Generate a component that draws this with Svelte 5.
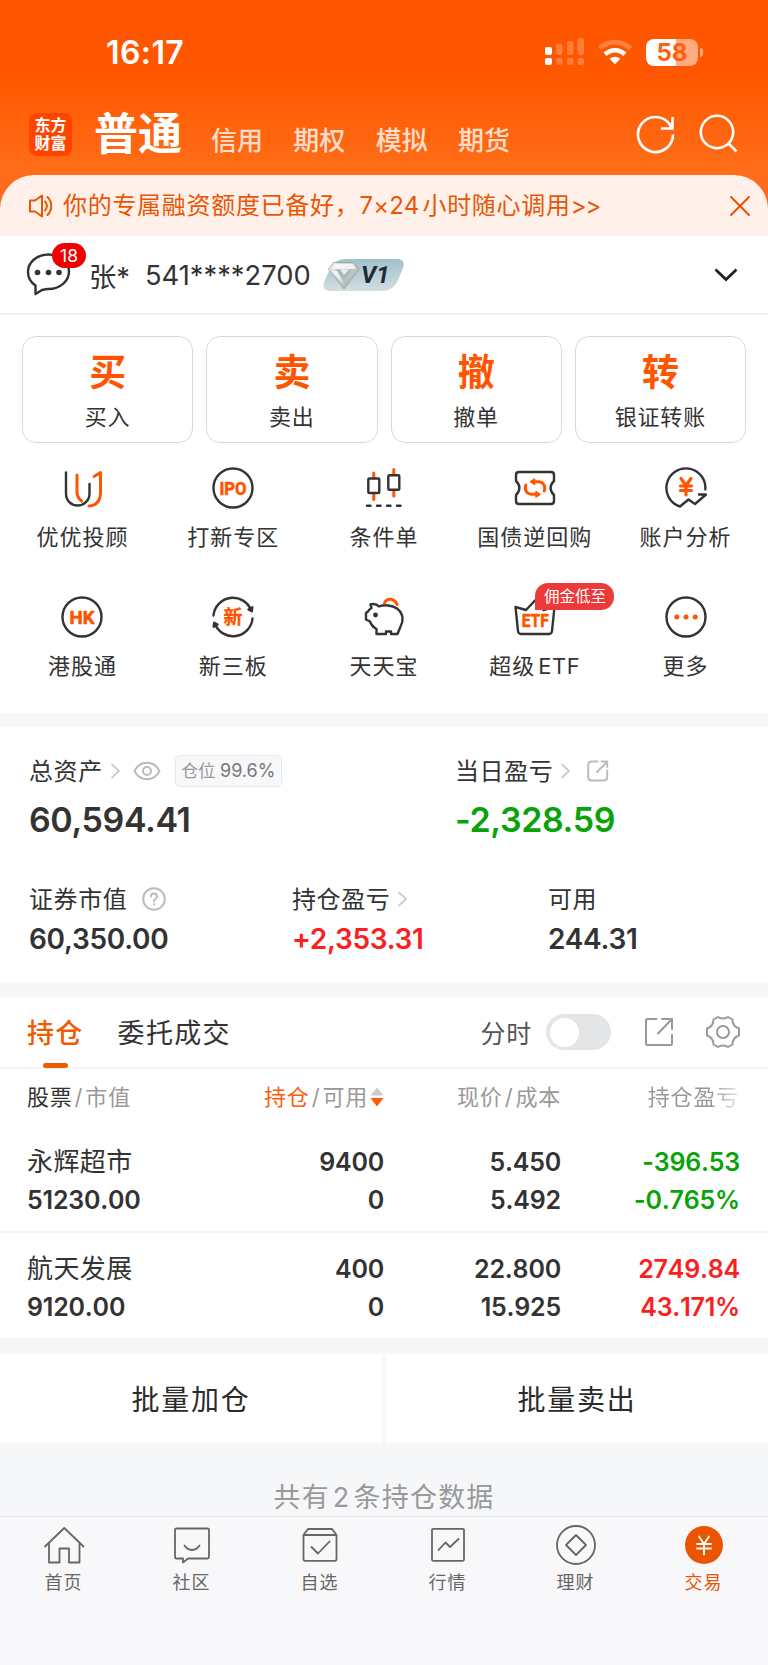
<script>
	let intraday = $state(false);

	const accountTabs = ['信用', '期权', '模拟', '期货'];

	const actions = [
		{ glyph: '买', label: '买入' },
		{ glyph: '卖', label: '卖出' },
		{ glyph: '撤', label: '撤单' },
		{ glyph: '转', label: '银证转账' }
	];

	const tools = [
		{ icon: 'advisor', label: '优优投顾' },
		{ icon: 'ipo', label: '打新专区' },
		{ icon: 'candles', label: '条件单' },
		{ icon: 'repo', label: '国债逆回购' },
		{ icon: 'analysis', label: '账户分析' },
		{ icon: 'hk', label: '港股通' },
		{ icon: 'neeq', label: '新三板' },
		{ icon: 'piggy', label: '天天宝' },
		{ icon: 'etf', label: '超级', latin: 'ETF', tip: '佣金低至' },
		{ icon: 'more', label: '更多' }
	];

	const holdings = [
		{
			name: '永辉超市',
			value: '51230.00',
			amount: '9400',
			usable: '0',
			price: '5.450',
			cost: '5.492',
			profit: '-396.53',
			rate: '-0.765%'
		},
		{
			name: '航天发展',
			value: '9120.00',
			amount: '400',
			usable: '0',
			price: '22.800',
			cost: '15.925',
			profit: '2749.84',
			rate: '43.171%'
		}
	];

	const nav = [
		{ icon: 'home', label: '首页' },
		{ icon: 'chat', label: '社区' },
		{ icon: 'watch', label: '自选' },
		{ icon: 'market', label: '行情' },
		{ icon: 'wealth', label: '理财' },
		{ icon: 'trade', label: '交易', active: true }
	];
</script>

{#snippet arrow()}
	<svg class="arrow" width="9" height="16" viewBox="0 0 9 16">
		<path d="M1 1.500 8 8 1 14.500" />
	</svg>
{/snippet}

{#snippet toolIcon(name)}
	<svg class="tool-icon" width="44" height="44" viewBox="0 0 44 44">
		{#if name === 'advisor'}
			<path d="M6 6.500v21c0 7 5 12 11.500 12s12-5 12-12V18" />
			<path class="hot" d="M17 9v17c0 4 1.500 6.500 4.500 9M34 10.500l6.500-4V26c0 9-4 13.500-11.500 14" />
		{:else if name === 'ipo'}
			<circle cx="22" cy="22" r="19.500" />
			<text x="22" y="28.500" textLength="27" lengthAdjust="spacingAndGlyphs">IPO</text>
		{:else if name === 'candles'}
			<path class="hot" d="M11.800 7v5M11.800 28.500v5M31.800 3.500v5M31.800 25v5" />
			<rect x="6.300" y="12.500" width="11" height="14.500" rx="1" />
			<rect x="26.300" y="9.200" width="11" height="14.500" rx="1" />
			<path d="M5 39.800h3.500M15 39.800h3.500M25 39.800h3.500M35 39.800h3.500" />
		{:else if name === 'repo'}
			<path
				d="M6 6h32c1.800 0 3 1.200 3 3v6c-4.500 4-4.500 10 0 14v6c0 1.800-1.200 3-3 3H6c-1.800 0-3-1.200-3-3v-6c4.500-4 4.500-10 0-14V9c0-1.800 1.200-3 3-3z"
			/>
			<path class="hot" d="M12.800 19c-1.600 5 .7 9.300 6.200 9.300h4M31.200 25c1.600-5-.7-9.300-6.200-9.300h-4" />
			<path class="hot fill" d="m21.500 13-4 2.700 4 2.700zM23 25.600l4 2.700-4 2.700z" />
		{:else if name === 'analysis'}
			<path d="M41.300 23.500A19.500 19.500 0 1 0 16 40.500l8.500-7 6.500 4.500L42 28.500h-7" />
			<path class="hot yen" d="m17 12.500 5 7 5-7M22 19.500V29M16.500 20h11M16.500 24.500h11" />
		{:else if name === 'hk'}
			<circle cx="22" cy="22" r="19.500" />
			<text x="22" y="28.500" textLength="25" lengthAdjust="spacingAndGlyphs">HK</text>
		{:else if name === 'neeq'}
			<path d="M2.500 20.500A19.500 19.500 0 0 1 40 15M41.500 23.500A19.500 19.500 0 0 1 4 29" />
			<path class="solid" d="m37.500 14.500 3.300 1.800.5-4zM6.500 29.500l-3.300-1.800-.5 4z" />
			<text class="zh" x="22" y="29">新</text>
		{:else if name === 'piggy'}
			<path
				d="M8.500 9.500c3-1 6-.5 8.500 2 5-2 13-1.500 18 2 7 5.500 6.500 13 3.500 18L35.500 39H29v-2.500h-5V39h-9.500v-5c-3.500-2-5.500-4.500-6.500-7.500l-4-2v-6.500L6 16.500c.8-1.500 2-2.700 3.500-3.500z"
			/>
			<path class="hot" d="M22.500 8c2-5 10-5.500 12.500 1.500" />
			<circle class="solid" cx="13.500" cy="20" r="1.200" />
		{:else if name === 'etf'}
			<path
				d="M2.500 12 5 36c.2 2 1.200 3 3 3h28c1.800 0 2.800-1 3-3l2.500-24-11 3L22 5.500 13 15z"
			/>
			<text x="22.200" y="32" textLength="27" lengthAdjust="spacingAndGlyphs">ETF</text>
		{:else if name === 'more'}
			<circle cx="22" cy="22" r="19.500" />
			<path class="dots" d="M12.800 22h.01M22 22h.01M31.200 22h.01" />
		{/if}
	</svg>
{/snippet}

{#snippet navIcon(name)}
	<svg class="nav-icon" width="42" height="42" viewBox="0 0 42 42">
		{#if name === 'home'}
			<path d="M2 22.500 21.300 4l19.200 18.500M6 19v19.500h10.500v-14h9.500v14h10.500V19" />
		{:else if name === 'chat'}
			<path
				d="M5.500 4.500h31c1 0 1.500.5 1.500 1.500v27c0 1-.5 1.500-1.500 1.500H17l-5 4v-4H5.500C4.500 34.500 4 34 4 33V6c0-1 .5-1.500 1.500-1.500zM13.500 21.500c4 6 11 6 15 0"
			/>
		{:else if name === 'watch'}
			<path
				d="M4.500 11 9 5h24l4.500 6v24c0 1.200-.5 1.800-1.700 1.800H6.200c-1.200 0-1.700-.6-1.700-1.800zM4.500 11h33M12.500 23l6.500 6.500 11.500-12"
			/>
		{:else if name === 'market'}
			<rect x="5" y="4.800" width="32" height="32" rx="1.200" />
			<path d="m11.500 26 7-7.500 4.500 4.500 8.500-8" />
		{:else if name === 'wealth'}
			<circle cx="21" cy="21" r="19" />
			<path d="M21 11 31 21 21 31 11 21z" />
		{:else if name === 'trade'}
			<circle class="coin" cx="21" cy="21" r="19" />
			<path class="mark" d="m16 12.500 5 7.500 5-7.500M21 20v10.500M14 20h14M14 24.500h14" />
		{/if}
	</svg>
{/snippet}

<div class="screen">
	<header>
		<div class="status">
			<span class="time">16:17</span>
			<div class="signals">
				<svg width="40" height="28" viewBox="0 0 40 28">
					<g fill="#fff">
						<rect x="1" y="9" width="7" height="8" rx="2" />
						<rect x="1" y="20" width="7" height="7" rx="2" />
					</g>
					<g fill="#fff" opacity=".22">
						<rect x="12" y="6" width="6.500" height="11" rx="2" />
						<rect x="23" y="3" width="6.500" height="14" rx="2" />
						<rect x="33.500" y="0" width="6.500" height="17" rx="2" />
						<rect x="12" y="20" width="6.500" height="7" rx="2" />
						<rect x="23" y="20" width="6.500" height="7" rx="2" />
						<rect x="33.500" y="20" width="6.500" height="7" rx="2" />
					</g>
				</svg>
				<svg class="wifi" width="36" height="26" viewBox="0 0 36 26">
					<g fill="none" stroke="#fff" stroke-width="4.600">
						<path opacity=".25" d="M2.500 9.500c9-8.500 22-8.500 31 0" />
						<path d="M8 15.300c6-5.500 14-5.500 20 0" />
					</g>
					<path fill="#fff" d="M12.500 19.800c3.300-2.800 7.700-2.800 11 0L18 25.300z" />
				</svg>
				<div class="battery"><span>58</span></div>
			</div>
		</div>
		<div class="titlebar">
			<div class="logo">东方<br />财富</div>
			<h1>普通</h1>
			<nav class="account-tabs">
				{#each accountTabs as tab}
					<span>{tab}</span>
				{/each}
			</nav>
			<svg class="head-icon" width="40" height="42" viewBox="0 0 40 42">
				<path d="M37 21.500A17.500 17.500 0 1 1 33.500 11l2 3.500M36.500 4v11.500H25" />
			</svg>
			<svg class="head-icon" width="42" height="42" viewBox="0 0 42 42">
				<circle cx="19" cy="19" r="16.200" />
				<path d="m30 30 8.500 8.500" />
			</svg>
		</div>
	</header>

	<div class="notice-wrap">
		<div class="notice">
			<svg class="horn" width="26" height="26" viewBox="0 0 26 26">
				<path
					d="M2 7.500h5l7-5v21l-7-5H2zM17 8.500c2.500 2.500 2.500 6.500 0 9M19.500 4c5 5 5 13 0 18"
				/>
			</svg>
			<p>你的专属融资额度已备好，<span class="seven">7×24</span>小时随心调用<span class="more">&gt;&gt;</span></p>
			<svg class="close" width="20" height="20" viewBox="0 0 20 20">
				<path d="m1 1 18 18M19 1 1 19" />
			</svg>
		</div>
	</div>

	<div class="account">
		<div class="message">
			<svg width="46" height="46" viewBox="0 0 46 46">
				<path
					d="M22.500 2.500c11.500 0 20.500 7.500 20.500 17S34 37 22.500 37c-2.500 0-4.500.5-6.500 1L9.500 42v-8.500C5 30.500 2 25.500 2 20 2 10 11 2.500 22.500 2.500z"
				/>
				<path class="dots" d="M11.500 20.500h.01M22.500 20.500h.01M33 20.500h.01" />
			</svg>
			<b>18</b>
		</div>
		<span class="owner">张*</span>
		<span class="number">541****2700</span>
		<div class="level">
			<svg width="82" height="34" viewBox="0 0 82 34">
				<defs>
					<linearGradient id="plate" x1="0" y1="0" x2="0" y2="1">
						<stop offset="0" stop-color="#9fc1ca" />
						<stop offset="1" stop-color="#d3dde1" />
					</linearGradient>
					<linearGradient id="gem" x1="0" y1="0" x2="1" y2="1">
						<stop offset="0" stop-color="#e9eded" />
						<stop offset="1" stop-color="#9aa5a8" />
					</linearGradient>
				</defs>
				<path
					fill="url(#plate)"
					d="M24 1h50c6 0 8 4 6 9l-5 12c-3 7-8 11-16 11H8c-7 0-9-4-6.500-10L6 13C9 5 14 1 24 1z"
				/>
				<path fill="url(#gem)" stroke="#8f9b9e" stroke-width=".7" d="M11 4.500h20l5 7L21 31 5.500 11.500z" />
				<path fill="#fff" opacity=".75" d="M12 6h18l3 5H9zM9 13h5l7 14z" />
				<path fill="#aab5b8" d="M13 11.500h16L21 22z" />
				<path fill="#e8eeee" d="M17 11.500h9L21 17z" />
			</svg>
			<em>V1</em>
		</div>
		<svg class="expand" width="26" height="16" viewBox="0 0 26 16">
			<path d="m2.500 2.500 10.500 10 10.500-10" />
		</svg>
	</div>

	<div class="actions">
		{#each actions as action}
			<button>
				<strong>{action.glyph}</strong>
				<span>{action.label}</span>
			</button>
		{/each}
	</div>

	<div class="tools">
		{#each tools as tool}
			<div class="tool">
				{@render toolIcon(tool.icon)}
				<span class="tool-label">{tool.label}{#if tool.latin}<span class="latin">{tool.latin}</span>{/if}</span>
				{#if tool.tip}
					<span class="tip">{tool.tip}</span>
				{/if}
			</div>
		{/each}
	</div>

	<section class="assets">
		<div class="totals">
			<div>
				<div class="caption">
					<span>总资产</span>{@render arrow()}
					<svg class="eye" width="28" height="20" viewBox="0 0 28 20">
						<path d="M1.500 10C7-1 21-1 26.500 10 21 21 7 21 1.500 10z" />
						<circle cx="14" cy="10" r="4" />
					</svg>
					<div class="ratio">仓位 <b>99.6%</b></div>
				</div>
				<div class="big">60,594.41</div>
			</div>
			<div>
				<div class="caption">
					<span>当日盈亏</span>{@render arrow()}
					<svg class="share" width="22" height="22" viewBox="0 0 22 22">
						<path
							d="M10.500 1.500h-6c-2 0-3.300 1.300-3.300 3.300v12.400c0 2 1.300 3.300 3.300 3.300h12.400c2 0 3.300-1.300 3.300-3.300V10.500M10 12 20 2M14.500 1.500h5.700v5.500"
						/>
					</svg>
				</div>
				<div class="big down">-2,328.59</div>
			</div>
		</div>
		<div class="details">
			<div>
				<div class="caption">
					<span>证券市值</span>
					<svg class="help" width="24" height="24" viewBox="0 0 24 24">
						<circle cx="12" cy="12" r="10.800" />
						<path d="M9 9.500c0-4 6-4 6-.3 0 2.600-3 2.600-3 5M12 17v.5" />
					</svg>
				</div>
				<div class="mid">60,350.00</div>
			</div>
			<div>
				<div class="caption"><span>持仓盈亏</span>{@render arrow()}</div>
				<div class="mid up">+2,353.31</div>
			</div>
			<div>
				<div class="caption"><span>可用</span></div>
				<div class="mid">244.31</div>
			</div>
		</div>
	</section>

	<section class="positions">
		<div class="tabs">
			<span class="tab active">持仓</span>
			<span class="tab">委托成交</span>
			<span class="minute">分时</span>
			<button
				class="switch"
				class:on={intraday}
				aria-label="分时"
				onclick={() => (intraday = !intraday)}
			></button>
			<svg class="export" width="30" height="30" viewBox="0 0 30 30">
				<path d="M12.500 2H3.500C2.500 2 2 2.500 2 3.500v23c0 1 .5 1.500 1.500 1.500h23c1 0 1.500-.5 1.500-1.500V18M14 16.500 28 2M18 2h10v10" />
			</svg>
			<svg class="gear" width="34" height="34" viewBox="0 0 34 34">
				<path
					d="M12 2c2.500 2 7.500 2 10 0l4.500 2.500c0 4.500 2 7.500 6.500 9v7c-4.500 1.500-6.500 4.500-6.500 9L22 32c-2.500-2-7.500-2-10 0l-4.500-2.500c0-4.500-2-7.500-6.500-9v-7c4.500-1.500 6.500-4.500 6.500-9z"
				/>
				<circle cx="17" cy="17" r="6" />
			</svg>
		</div>

		<div class="row head">
			<span><b>股票</b><i>/</i>市值</span>
			<span class="sorted">
				<em>持仓</em><i>/</i>可用
				<svg width="14" height="20" viewBox="0 0 14 20">
					<path fill="#ccc" d="M7 .5 13.500 8.500H.5z" />
					<path fill="#ff5a0a" d="M.5 11h13L7 19.500z" />
				</svg>
			</span>
			<span>现价<i>/</i>成本</span>
			<span class="faded">持仓盈亏</span>
		</div>
		{#each holdings as stock}
			<div class="row">
				<div><span class="name">{stock.name}</span><span>{stock.value}</span></div>
				<div><span>{stock.amount}</span><span>{stock.usable}</span></div>
				<div><span>{stock.price}</span><span>{stock.cost}</span></div>
				<div class={stock.profit.startsWith('-') ? 'down' : 'up'}>
					<span>{stock.profit}</span><span>{stock.rate}</span>
				</div>
			</div>
		{/each}
	</section>

	<div class="batch">
		<button>批量加仓</button>
		<button>批量卖出</button>
	</div>

	<p class="summary">共有<span>2</span>条持仓数据</p>

	<nav class="bottom">
		{#each nav as item}
			<div class="nav-item" class:active={item.active}>
				{@render navIcon(item.icon)}
				<span>{item.label}</span>
			</div>
		{/each}
	</nav>
</div>

<style>
	:global(body) {
		background: #f6f7f9;
	}
	.screen {
		width: 768px;
		height: 1665px;
		display: flex;
		flex-direction: column;
		overflow: hidden;
		background: #f6f7f9;
		color: #333;
		font-family: Inter, 'Noto Sans CJK SC', sans-serif;
	}
	.screen * {
		box-sizing: border-box;
	}
	svg {
		display: block;
		flex: none;
		fill: none;
		stroke-linecap: round;
		stroke-linejoin: round;
	}
	p,
	h1 {
		margin: 0;
	}
	b,
	i,
	em {
		font-weight: inherit;
		font-style: normal;
	}
	button {
		padding: 0;
		border: 0;
		background: #fff;
		color: inherit;
		font-family: inherit;
	}
	.up {
		color: #fa2020;
	}
	.down {
		color: #09a309;
	}

	header {
		height: 175px;
		background: linear-gradient(#ff5700 0, #ff5700 75px, #ff6d18 170px);
		color: #fff;
	}
	.status {
		height: 96px;
		padding: 8px 66px 0 106px;
		display: flex;
		align-items: center;
		justify-content: space-between;
	}
	.time {
		font-size: 32px;
		font-weight: 600;
		letter-spacing: 0.4px;
	}
	.signals {
		display: flex;
		align-items: center;
		gap: 13px;
	}
	.wifi {
		stroke-linecap: butt;
	}
	.battery {
		position: relative;
		width: 52px;
		height: 27px;
		margin-right: 4px;
		border-radius: 8px;
		background: linear-gradient(90deg, #fff 57%, #ffab80 57%);
		color: #ff5f0f;
		font-size: 24px;
		font-weight: 700;
		line-height: 28px;
		text-align: center;
	}
	.battery::after {
		content: '';
		position: absolute;
		right: -5px;
		top: 9px;
		width: 3px;
		height: 9px;
		border-radius: 0 4px 4px 0;
		background: #ffab80;
	}
	.titlebar {
		height: 79px;
		padding: 0 28px 0 29px;
		display: flex;
		align-items: flex-start;
	}
	.logo {
		width: 43px;
		height: 43px;
		margin-top: 17px;
		padding-top: 3px;
		border-radius: 8px;
		background: #ff4400;
		font-size: 16px;
		font-weight: 700;
		line-height: 18px;
		text-align: center;
	}
	h1 {
		margin: 15px 0 0 22px;
		font-size: 44px;
		font-weight: 700;
		line-height: 46px;
	}
	.account-tabs {
		margin: 27px auto 0 29px;
		display: flex;
		gap: 30.3px;
		font-size: 26px;
		font-weight: 500;
		line-height: 36px;
		color: rgba(255, 255, 255, 0.8);
	}
	.head-icon {
		margin-top: 17px;
		stroke: #fff;
		stroke-width: 2.6;
		stroke-linecap: butt;
		stroke-linejoin: miter;
	}
	.head-icon + .head-icon {
		margin-left: 22px;
	}

	.notice-wrap {
		background: #ff6a1c;
	}
	.notice {
		height: 61px;
		padding: 0 18px 0 28px;
		display: flex;
		align-items: center;
		border-radius: 34px 34px 0 0;
		background: #fff1ea;
		color: #ea5504;
		font-size: 24px;
		letter-spacing: 0.7px;
	}
	.notice p {
		flex: 1;
		margin-left: 9px;
		line-height: 34px;
		white-space: nowrap;
	}
	.seven {
		margin-right: 3px;
		letter-spacing: 0.2px;
	}
	.more {
		letter-spacing: -1px;
	}
	.horn,
	.close {
		stroke: currentColor;
		stroke-width: 2;
	}

	.account {
		height: 79px;
		padding: 0 29px 0 26px;
		display: flex;
		align-items: center;
		border-bottom: 2px solid #f2f2f2;
		background: #fff;
		font-size: 27.3px;
	}
	.message {
		position: relative;
		width: 46px;
		margin-right: 17px;
		stroke: #333;
		stroke-width: 2.4;
	}
	.dots {
		stroke-width: 5.6;
	}
	.message b {
		position: absolute;
		left: 26px;
		top: -9px;
		width: 34px;
		height: 25px;
		border-radius: 13px;
		background: #f00000;
		color: #fff;
		font-size: 17.5px;
		line-height: 25px;
		text-align: center;
	}
	.owner {
		width: 56px;
	}
	.number {
		width: 178px;
		padding-top: 1px;
		white-space: nowrap;
	}
	.level {
		position: relative;
	}
	.level em {
		position: absolute;
		left: 38px;
		top: 3px;
		color: #1d2a3a;
		font-family: Roboto, sans-serif;
		font-size: 24px;
		font-style: italic;
		font-weight: 700;
		line-height: 28px;
	}
	.expand {
		margin-left: auto;
		stroke: #222;
		stroke-width: 2.8;
		stroke-linecap: butt;
		stroke-linejoin: miter;
	}

	.actions {
		height: 128px;
		padding: 21px 22px 0;
		display: grid;
		grid-template-columns: repeat(4, 1fr);
		gap: 13px;
		background: #fff;
	}
	.actions button {
		height: 107px;
		padding-top: 15px;
		display: flex;
		flex-direction: column;
		align-items: center;
		border: 1.4px solid #d8d8d8;
		border-radius: 14px;
	}
	.actions strong {
		height: 43px;
		color: #ff5500;
		font-size: 37px;
		font-weight: 700;
		line-height: 42px;
	}
	.actions span {
		font-size: 22px;
		letter-spacing: 0.8px;
		line-height: 44px;
	}

	.tools {
		height: 270px;
		padding: 23px 7px 0;
		display: grid;
		grid-template-columns: repeat(5, 1fr);
		grid-auto-rows: 128.5px;
		background: #fff;
	}
	.tool {
		position: relative;
		display: flex;
		flex-direction: column;
		align-items: center;
	}
	.tool-icon {
		stroke: #333;
		stroke-width: 2.4;
	}
	.hot {
		stroke: #ff5500;
		stroke-width: 3;
	}
	.yen {
		stroke-width: 3.2;
	}
	.fill {
		fill: #ff5500;
		stroke-width: 1.5;
	}
	.solid {
		fill: #333;
	}
	.tool-icon .dots {
		stroke: #ff5500;
		stroke-width: 5;
	}
	.tool-icon text {
		fill: #ff5500;
		stroke: #ff5500;
		stroke-width: 0.6;
		font-family: Roboto, 'Noto Sans CJK SC', sans-serif;
		font-size: 18px;
		font-weight: 700;
		text-anchor: middle;
	}
	.tool-icon .zh {
		stroke-width: 0.3;
		font-size: 19px;
	}
	.tool-label {
		margin-top: 10px;
		font-size: 22px;
		letter-spacing: 1px;
		line-height: 34px;
		white-space: nowrap;
	}
	.latin {
		margin-left: 3px;
		letter-spacing: 0.6px;
	}
	.tip {
		position: absolute;
		left: 76px;
		top: -12px;
		width: 79px;
		height: 27px;
		border-radius: 13px 13px 13px 0;
		background: #ec3a3a;
		color: #fff;
		font-size: 15.5px;
		line-height: 27px;
		text-align: center;
	}

	.assets {
		height: 256px;
		margin-top: 14px;
		padding: 26px 29px 0;
		background: #fff;
	}
	.totals {
		height: 128px;
		display: grid;
		grid-template-columns: 426px 1fr;
	}
	.details {
		display: grid;
		grid-template-columns: 263px 256px 1fr;
	}
	.caption {
		height: 36px;
		display: flex;
		align-items: center;
		font-size: 24px;
		letter-spacing: 0.6px;
		white-space: nowrap;
	}
	.caption > span {
		margin-top: -4px;
	}
	.arrow {
		margin-left: 8px;
		stroke: #ccc;
		stroke-width: 1.8;
	}
	.eye,
	.share,
	.help {
		stroke: #bbb;
		stroke-width: 2;
	}
	.eye {
		margin-left: 13px;
	}
	.share {
		margin-left: 17px;
	}
	.help {
		margin-left: 15px;
	}
	.ratio {
		width: 107px;
		height: 32px;
		margin-left: 14px;
		border: 1.5px solid #e8e9ec;
		border-radius: 5px;
		background: #f7f8fa;
		color: #999;
		font-size: 17px;
		letter-spacing: 0;
		line-height: 30px;
		text-align: center;
	}
	.ratio b {
		color: #777;
		font-size: 18px;
	}
	.big {
		margin-top: 10px;
		font-size: 34px;
		font-weight: 600;
		letter-spacing: -0.4px;
		line-height: 42px;
	}
	.mid {
		margin-top: 4px;
		font-size: 28px;
		font-weight: 600;
		letter-spacing: -0.3px;
		line-height: 36px;
	}

	.positions {
		height: 342px;
		margin-top: 14px;
		background: #fff;
	}
	.tabs {
		height: 72px;
		padding: 0 28px 0 27px;
		display: flex;
		align-items: center;
		border-bottom: 2px solid #f5f5f6;
	}
	.tab {
		position: relative;
		margin-right: 34px;
		padding-top: 4px;
		font-size: 27px;
		letter-spacing: 1.3px;
		line-height: 66px;
	}
	.tab.active {
		color: #f05a00;
		font-weight: 500;
	}
	.tab.active::after {
		content: '';
		position: absolute;
		left: 16px;
		bottom: -1px;
		width: 25px;
		height: 5px;
		border-radius: 2.5px;
		background: #f05a00;
	}
	.minute {
		margin-left: auto;
		color: #555;
		font-size: 25px;
		letter-spacing: 0.8px;
	}
	.switch {
		width: 65px;
		height: 36px;
		margin: 0 33px 0 14px;
		padding: 3.500px;
		border-radius: 18px;
		background: #e4e5e7;
	}
	.switch::before {
		content: '';
		display: block;
		width: 29px;
		height: 29px;
		border-radius: 50%;
		background: #fff;
	}
	.switch.on {
		background: #f05a00;
	}
	.switch.on::before {
		margin-left: auto;
	}
	.export,
	.gear {
		stroke: #999;
		stroke-width: 2;
	}
	.gear {
		margin-left: 32px;
	}

	.row {
		height: 107px;
		padding: 17px 28px 0 27px;
		display: grid;
		grid-template-columns: 180px 177px 177px 1fr;
		align-content: start;
		border-bottom: 2px solid #f5f5f6;
		font-size: 25px;
		font-weight: 600;
		font-kerning: none;
		letter-spacing: -0.2px;
		text-align: right;
	}
	.row > :first-child {
		text-align: left;
	}
	.row div span {
		display: block;
		line-height: 38px;
	}
	.row .name {
		font-size: 26px;
		font-weight: 400;
		letter-spacing: 0.4px;
	}
	.row.head {
		height: 57px;
		padding-top: 10px;
		border: 0;
		color: #999;
		font-size: 22px;
		font-weight: 400;
		letter-spacing: 0.8px;
		line-height: 36px;
		white-space: nowrap;
	}
	.head b {
		color: #333;
	}
	.head em {
		color: #ff5a0a;
	}
	.head i {
		margin: 0 2px;
	}
	.sorted {
		height: 36px;
		display: flex;
		align-items: center;
		justify-content: flex-end;
	}
	.sorted svg {
		margin-left: 2px;
	}
	.faded {
		padding-right: 1px;
		-webkit-mask-image: linear-gradient(90deg, #000 calc(100% - 28px), rgba(0, 0, 0, 0.2));
		mask-image: linear-gradient(90deg, #000 calc(100% - 28px), rgba(0, 0, 0, 0.2));
	}

	.batch {
		height: 89px;
		margin-top: 15px;
		display: grid;
		grid-template-columns: 382px 1fr;
		gap: 4px;
	}
	.batch button {
		padding-bottom: 1px;
		color: #2b2b2b;
		font-size: 28px;
		letter-spacing: 1.8px;
	}
	.summary {
		height: 73px;
		padding-top: 35px;
		color: #999;
		font-size: 27px;
		letter-spacing: 1.2px;
		line-height: 40px;
		text-align: center;
	}
	.summary span {
		margin: 0 3px;
	}

	.bottom {
		flex: 1;
		padding-top: 7px;
		display: grid;
		grid-template-columns: repeat(6, 1fr);
		border-top: 1.5px solid #e6e7e9;
		background: #f8f8fb;
	}
	.nav-item {
		display: flex;
		flex-direction: column;
		align-items: center;
		color: #666;
		font-size: 18px;
		letter-spacing: 1px;
		line-height: 34px;
	}
	.nav-item span {
		margin-right: 1px;
	}
	.nav-item.active {
		color: #ea5504;
	}
	.nav-icon {
		stroke: #666;
		stroke-width: 1.8;
	}
	.nav-icon .coin {
		fill: #ea5504;
		stroke: none;
	}
	.nav-icon .mark {
		stroke: #fff;
	}
</style>
